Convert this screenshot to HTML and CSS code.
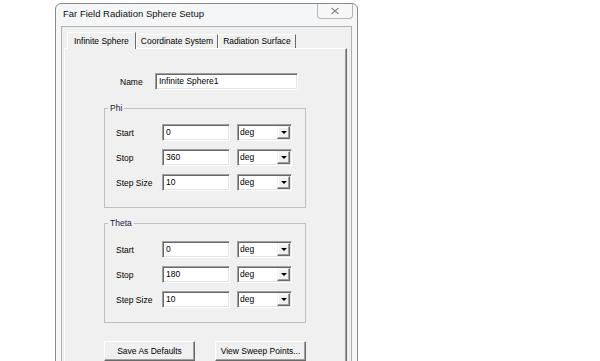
FILE: index.html
```html
<!DOCTYPE html>
<html lang="en">
<head>
    <meta charset="UTF-8">
    <title>Far Field Radiation Sphere Setup</title>
    <link rel="stylesheet" href="styles.css">
</head>
<body>

<div class="window">
    <div class="titlebar">
        <span class="title">Far Field Radiation Sphere Setup</span>
        <div class="close">
            <svg width="10" height="8" viewBox="0 0 10 8">
                <path d="M1.5 1 L8.5 7 M8.5 1 L1.5 7" stroke="#fff" stroke-width="3"/>
                <path d="M1.5 1 L8.5 7 M8.5 1 L1.5 7" stroke="#8a8a8a" stroke-width="1.3"/>
            </svg>
        </div>
    </div>

    <div class="client">
        <div class="tabs">
            <span class="tab active">Infinite Sphere</span>
            <span class="tab">Coordinate System</span>
            <span class="tab">Radiation Surface</span>
        </div>

        <div class="panel">
            <div class="name-row">
                <label>Name</label>
                <div class="field name-field">Infinite Sphere1</div>
            </div>

            <fieldset class="group">
                <legend>Phi</legend>
                <div class="row">
                    <label>Start</label>
                    <div class="field">0</div>
                    <div class="combo"><span>deg</span><i class="drop"></i></div>
                </div>
                <div class="row">
                    <label>Stop</label>
                    <div class="field">360</div>
                    <div class="combo"><span>deg</span><i class="drop"></i></div>
                </div>
                <div class="row">
                    <label>Step Size</label>
                    <div class="field">10</div>
                    <div class="combo"><span>deg</span><i class="drop"></i></div>
                </div>
            </fieldset>

            <fieldset class="group theta">
                <legend>Theta</legend>
                <div class="row">
                    <label>Start</label>
                    <div class="field">0</div>
                    <div class="combo"><span>deg</span><i class="drop"></i></div>
                </div>
                <div class="row">
                    <label>Stop</label>
                    <div class="field">180</div>
                    <div class="combo"><span>deg</span><i class="drop"></i></div>
                </div>
                <div class="row">
                    <label>Step Size</label>
                    <div class="field">10</div>
                    <div class="combo"><span>deg</span><i class="drop"></i></div>
                </div>
            </fieldset>

            <div class="buttons">
                <button>Save As Defaults</button>
                <button>View Sweep Points...</button>
            </div>
        </div>
    </div>
</div>

</body>
</html>
```

FILE: styles.css
```css
* { margin: 0; padding: 0; box-sizing: border-box; }
html, body { height: 100%; overflow: hidden; }
body {
    background: #fff;
    font-family: "Liberation Sans", Arial, sans-serif;
    font-size: 8.5px;
    color: #000;
}

.window {
    margin: 3px 0 0 55px;
    width: 303px;
    height: 380px;
    background: #f5f6f7;
    border: 1px solid #8a8a8a;
    border-radius: 6px 6px 0 0;
    display: flex;
    flex-direction: column;
}
.titlebar {
    height: 22px;
    display: flex;
    align-items: flex-start;
    padding-left: 7px;
}
.title {
    font-size: 9.5px;
    line-height: 20px;
    color: #111;
}
.close {
    margin-left: auto;
    margin-right: 4px;
    width: 36px;
    height: 15px;
    border: 1px solid #b5b5b5;
    border-top: none;
    border-radius: 0 0 4px 4px;
    background: #f7f7f7;
    display: flex;
    align-items: center;
    justify-content: center;
}

.client {
    flex: 1;
    margin: 0 5px;
    background: #f0f0f0;
    border: 1px solid #b0b0b0;
    border-bottom: none;
    padding: 4px 4px 0 2px;
    display: flex;
    flex-direction: column;
}

.tabs {
    display: flex;
    align-items: flex-end;
    margin-left: 3px;
    height: 17px;
    position: relative;
    z-index: 1;
}
.tab {
    height: 14px;
    line-height: 13px;
    padding: 0 4px;
    border-top: 1px solid #fff;
    border-left: 1px solid #fff;
    border-right: 1px solid #6a6a6a;
}
.tab.active {
    height: 17px;
    line-height: 16px;
    padding: 0 6px;
    margin-bottom: -1px;
    background: #f0f0f0;
}

.panel {
    flex: 1;
    border: 1px solid #fff;
    border-right-color: #6a6a6a;
    border-bottom-color: #6a6a6a;
    box-shadow: inset -1px -1px 0 #a0a0a0;
    padding: 24px 0 0 39px;
}

.name-row {
    display: flex;
    align-items: center;
    padding-left: 16px;
    margin-bottom: 13px;
}
.name-row label { width: 35px; }

.field {
    height: 17px;
    width: 68px;
    background: #fff;
    border-top: 1px solid #a0a0a0;
    border-left: 1px solid #a0a0a0;
    border-right: 1px solid #fff;
    border-bottom: 1px solid #fff;
    box-shadow: inset 1px 1px 0 #696969, inset -1px -1px 0 #e3e3e3;
    padding-left: 3px;
    line-height: 15px;
}
.name-row .name-field { width: 143px; }

.group {
    width: 202px;
    border: 1px solid #c0c0c0;
    padding: 10px 0 16px 11px;
    display: flex;
    flex-direction: column;
    gap: 8px;
}
.group legend {
    line-height: 11px;
    margin-left: -8px;
    padding: 0 2px;
    color: #1a1a40;
}
.group.theta {
    margin-top: 10px;
    padding-top: 12px;
    padding-bottom: 14px;
}

.row {
    display: flex;
    align-items: center;
}
.row label { width: 46px; }

.combo {
    margin-left: 7px;
    width: 55px;
    height: 17px;
    background: #fff;
    border-top: 1px solid #a0a0a0;
    border-left: 1px solid #a0a0a0;
    border-right: 1px solid #fff;
    border-bottom: 1px solid #fff;
    box-shadow: inset 1px 1px 0 #696969, inset -1px -1px 0 #e3e3e3;
    display: flex;
    align-items: center;
    padding: 1px 1px 1px 2px;
}
.combo span { flex: 1; line-height: 13px; }
.drop {
    width: 13px;
    height: 13px;
    background: #f0f0f0;
    border-top: 1px solid #f0f0f0;
    border-left: 1px solid #f0f0f0;
    border-right: 1px solid #696969;
    border-bottom: 1px solid #696969;
    box-shadow: inset -1px -1px 0 #a0a0a0, inset 1px 1px 0 #fff;
    display: flex;
    align-items: center;
    justify-content: center;
}
.drop::after {
    content: "";
    border-left: 3px solid transparent;
    border-right: 3px solid transparent;
    border-top: 3px solid #000;
}

.buttons {
    width: 202px;
    margin-top: 18px;
    display: flex;
    justify-content: space-between;
}
.buttons button {
    width: 91px;
    height: 20px;
    font-family: inherit;
    font-size: 8.5px;
    background: #f0f0f0;
    border: 1px solid;
    border-color: #fff #696969 #696969 #fff;
    box-shadow: inset -1px -1px 0 #a0a0a0;
}
```
